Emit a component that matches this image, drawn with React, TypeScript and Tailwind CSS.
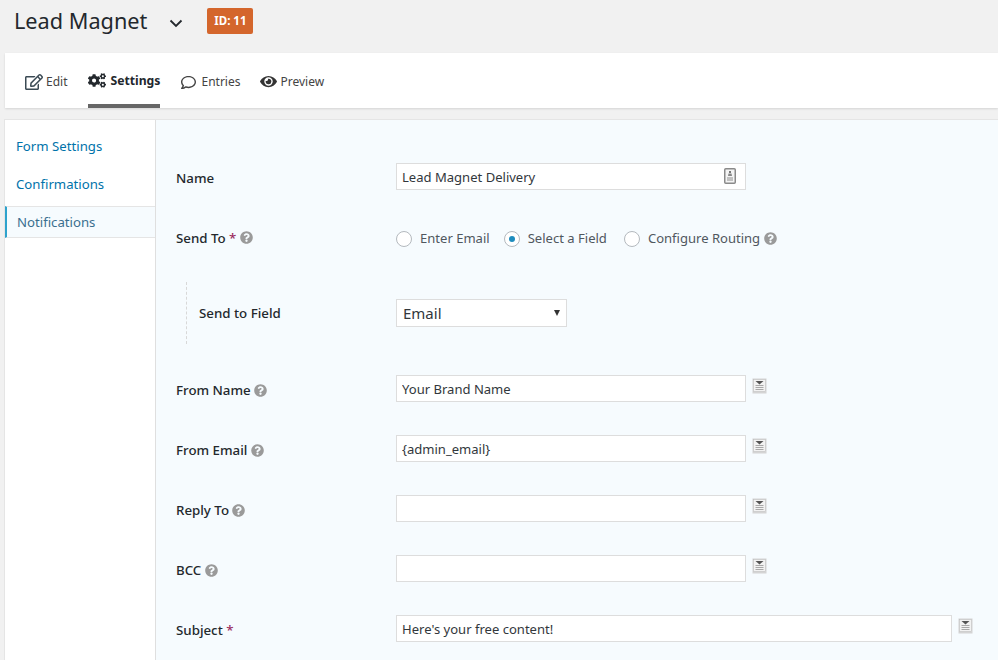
import React from 'react';
import { FaRegEdit, FaCogs, FaRegComment, FaEye, FaQuestionCircle } from 'react-icons/fa';

const Help: React.FC<{ className?: string }> = ({ className = '' }) => (
  <FaQuestionCircle className={`inline-block w-[13px] h-[13px] text-[#9a9a9a] ${className}`} />
);

const MergeTag: React.FC = () => (
  <svg width="15" height="16" viewBox="0 0 15 16" className="ml-[6px] -mt-[4px] shrink-0">
    <rect x="0.5" y="0.5" width="14" height="15" fill="#d4d4d4" />
    <rect x="1.5" y="1.5" width="12" height="12" fill="#f2f2f2" stroke="#bcbcbc" strokeWidth="0.5" />
    <path d="M3.5 3h8l-4 3.5z" fill="#555" />
    <path d="M3.5 7.5h8M3.5 9.5h8M3.5 11.5h8" stroke="#a8a8a8" strokeWidth="1" />
  </svg>
);

const ContactIcon: React.FC = () => (
  <svg width="12" height="16" viewBox="0 0 12 16" className="absolute right-[10px] top-[5px]">
    <rect x="0.75" y="0.75" width="10.5" height="14.5" rx="1" fill="#f4f4f4" stroke="#8a8a8a" strokeWidth="1.5" />
    <rect x="5" y="3" width="2" height="2" fill="#777" />
    <path d="M4.5 5.5h3l.5 2.5h-4z" fill="#888" />
    <path d="M3 10h6M3 12h6" stroke="#b0b0b0" strokeWidth="1.5" />
  </svg>
);

const Radio: React.FC<{ label: string; checked?: boolean }> = ({ label, checked }) => (
  <label className="flex items-center">
    <span className="w-4 h-4 rounded-full border border-[#b4b9be] bg-white flex items-center justify-center mr-2">
      {checked && <span className="w-[6px] h-[6px] rounded-full bg-[#1e8cbe]" />}
    </span>
    {label}
  </label>
);

const Row: React.FC<{ label: React.ReactNode; h: string; children: React.ReactNode }> = ({ label, h, children }) => (
  <div className={`flex items-center ${h}`}>
    <div className="w-[220px] shrink-0 pt-[6px] text-[13.3px] font-medium text-[#23282d]">{label}</div>
    {children}
  </div>
);

const TextInput: React.FC<{ value?: string; w?: string }> = ({ value = '', w = 'w-[350px]' }) => (
  <input
    readOnly
    value={value}
    className={`${w} h-[27px] px-[5px] pt-[2px] bg-white border border-[#dddddd] text-[13.05px] text-[#32373c] outline-none`}
  />
);

export default function App() {
  return (
    <div className="h-[660px] overflow-hidden bg-[#f1f1f1] text-[13px] text-[#444] font-['Noto_Sans','Open_Sans',sans-serif]">
      {/* title */}
      <div className="h-[53px] flex items-start pl-[14px] pt-[7px]">
        <h1 className="text-[21.7px] leading-[28px] text-[#23282d]">Lead Magnet</h1>
        <svg width="14" height="9" viewBox="0 0 14 9" className="ml-[22px] mt-[12px]">
          <path d="M1.5 1.5L7 7l5.5-5.5" fill="none" stroke="#23282d" strokeWidth="1.8" />
        </svg>
        <span className="ml-[24px] mt-[1px] h-[26px] w-[46px] flex items-center justify-center rounded-[2px] bg-[#d4662c] text-white text-[11.5px] font-bold">
          ID: 11
        </span>
      </div>

      {/* tabs */}
      <div className="ml-[5px] h-[55px] bg-white shadow-[0_1px_2px_rgba(0,0,0,0.12)] flex pl-[20px] text-[12px]">
        <a className="flex items-center h-full pt-[3px] text-[#444]">
          <FaRegEdit className="w-[18px] h-[16px] mr-[3px] -mt-[1px] text-[#3b4a54]" />
          Edit
        </a>
        <a className="ml-[21px] w-[72px] flex items-center h-full border-b-[4px] border-[#666] pt-[6px] text-[12.2px] font-bold text-[#23282d] whitespace-nowrap">
          <FaCogs className="w-[18px] h-[17px] mr-[4px] -mt-[2px] shrink-0" />
          Settings
        </a>
        <a className="ml-[20px] flex items-center h-full pt-[3px] text-[#444]">
          <FaRegComment className="w-[17px] h-[15px] mr-1 mt-[1px]" />
          Entries
        </a>
        <a className="ml-[20px] flex items-center h-full pt-[3px] text-[#444]">
          <FaEye className="w-[17px] h-[15px] mr-[3px] -mt-[1px] text-[#333]" />
          Preview
        </a>
      </div>

      {/* settings panel */}
      <div className="ml-[4px] mt-[11px] h-[541px] flex bg-white border-t border-l border-[#e5e5e5]">
        <nav className="w-[151px] shrink-0 border-r border-[#dfdfdf] pt-[7px] text-[13.2px] text-[#0073aa]">
          <a className="flex items-center h-[38px] pt-[2px] pl-[11px]">Form Settings</a>
          <a className="flex items-center h-[38px] pt-[2px] pl-[11px]">Confirmations</a>
          <a className="flex items-center h-[32px] mt-[3px] pt-[2px] pl-[10px] border-l-[2px] border-l-[#2ea2cc] border-y border-y-[#e5e5e5] bg-[#f6fbfe] text-[#3a6f8f]">
            Notifications
          </a>
        </nav>

        <form className="flex-1 bg-[#f6fbfe] pl-[20px] pt-[26px]">
          <Row label="Name" h="h-[60px]">
            <div className="relative">
              <TextInput value="Lead Magnet Delivery" />
              <ContactIcon />
            </div>
          </Row>

          <Row
            label={
              <div className="-mt-[4px]">
                Send To <span className="text-[#9b2c5e]">*</span> <Help className="-mt-[2px]" />
              </div>
            }
            h="h-[63px]"
          >
            <div className="flex items-center pt-[2px] text-[13.05px] text-[#50575e]">
              <Radio label="Enter Email" />
              <div className="ml-[14px]">
                <Radio label="Select a Field" checked />
              </div>
              <div className="ml-[17px] flex items-center gap-[4px]">
                <Radio label="Configure Routing" />
                <Help />
              </div>
            </div>
          </Row>

          <div className="flex items-center h-[87px] mb-[2px]">
            <div className="w-[220px] shrink-0 pl-[10px]">
              <div className="h-[62px] flex items-center pt-[2px] pl-[12px] border-l border-dashed border-[#d8d8d8] text-[13.3px] font-medium text-[#23282d]">
                Send to Field
              </div>
            </div>
            <div className="relative">
              <select className="appearance-none w-[171px] h-[28px] pl-[6px] pt-[2px] bg-white border border-[#dddddd] text-[15px] text-[#32373c] outline-none">
                <option>Email</option>
              </select>
              <span className="absolute right-[7px] top-[11px] w-0 h-0 border-x-[3px] border-x-transparent border-t-[6px] border-t-[#333]" />
            </div>
          </div>

          <Row label={<>From Name <Help className="-mt-[2px]" /></>} h="h-[60px]">
            <TextInput value="Your Brand Name" />
            <MergeTag />
          </Row>
          <Row label={<>From Email <Help className="-mt-[2px]" /></>} h="h-[60px]">
            <TextInput value="{admin_email}" />
            <MergeTag />
          </Row>
          <Row label={<>Reply To <Help className="-mt-[2px]" /></>} h="h-[60px]">
            <TextInput />
            <MergeTag />
          </Row>
          <Row label={<>BCC <Help className="-mt-[2px]" /></>} h="h-[60px]">
            <TextInput />
            <MergeTag />
          </Row>
          <Row label={<>Subject <span className="text-[#9b2c5e]">*</span></>} h="h-[60px]">
            <TextInput value="Here's your free content!" w="w-[556px]" />
            <MergeTag />
          </Row>
        </form>
      </div>
    </div>
  );
}
